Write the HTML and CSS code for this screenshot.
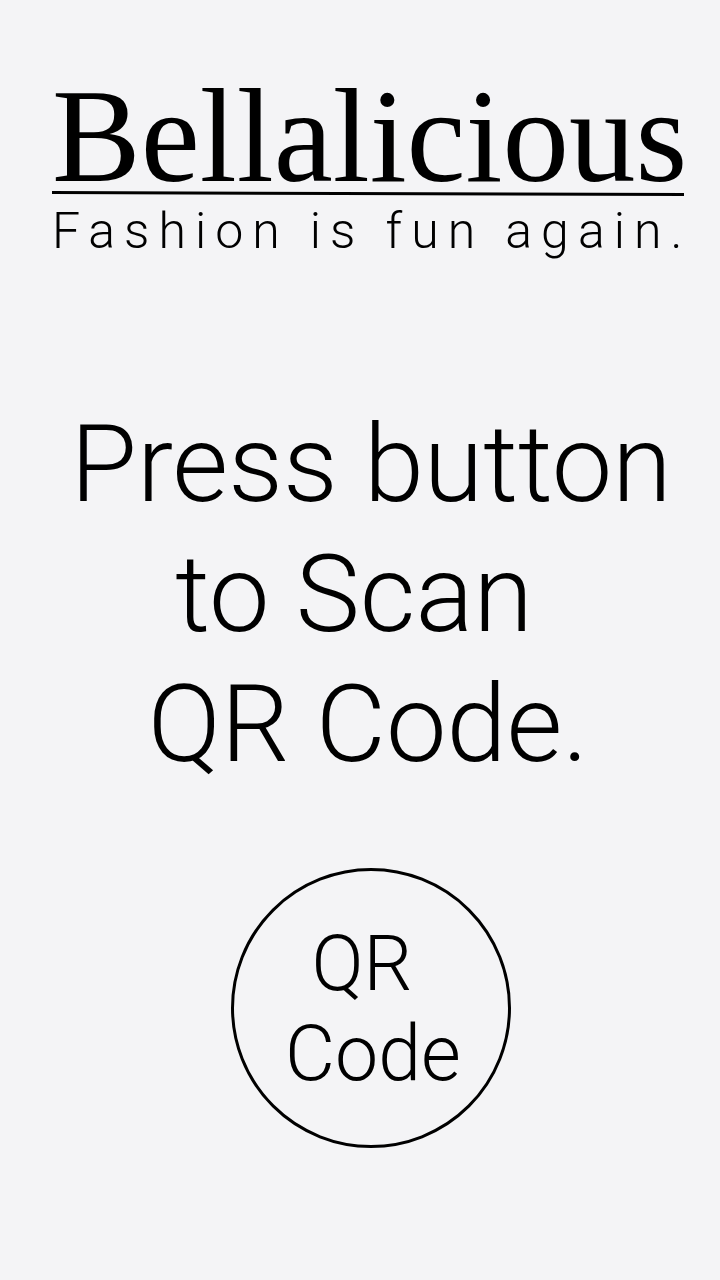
FILE: index.html
```html
<!DOCTYPE html>
<html lang="en">
<head>
<meta charset="utf-8">
<meta name="viewport" content="width=device-width, initial-scale=1">
<title>Bellalicious</title>
<link rel="stylesheet" href="styles.css">
</head>
<body>
<header class="brand">
<h1 class="brand-name">Bellalicious</h1>
<svg class="rule" viewBox="0 0 632 8" preserveAspectRatio="none" aria-hidden="true"><path d="M0 3L632 5V8L0 6Z"/></svg>
<p class="tagline">Fashion is fun again.</p>
</header>
<main class="scan">
<p class="prompt"><span class="line">Press button</span><span class="line line-middle">to Scan</span><span class="line line-last">QR Code.</span></p>
<button class="scan-button" type="button"><span class="label-top">QR</span><span class="label-bottom">Code</span></button>
</main>
</body>
</html>
```

FILE: styles.css
```css
* { box-sizing: border-box; }
body {
  margin: 0;
  min-height: 100vh;
  padding: 84px 30px 132px 52px;
  background: #f4f4f6;
  color: #000;
  font-family: Roboto, "Liberation Sans", sans-serif;
  font-weight: 300;
}
.brand { padding-right: 6px; }
.brand-name {
  margin: 0;
  font: 400 133px/104px "Liberation Serif", serif;
  white-space: nowrap;
}
.rule {
  display: block;
  width: 100%;
  height: 8px;
}
.tagline {
  margin: 0;
  font-size: 50px;
  line-height: 70px;
  letter-spacing: 9px;
  white-space: nowrap;
}
.scan {
  display: flex;
  flex-direction: column;
  align-items: center;
}
.prompt {
  margin: 133px 0 0;
  font-size: 108px;
  line-height: 130px;
  text-align: center;
  white-space: nowrap;
}
.line { display: block; }
.line-middle { padding-right: 34px; }
.line-last { padding-right: 6px; }
.scan-button {
  display: flex;
  flex-direction: column;
  justify-content: center;
  width: 280px;
  height: 280px;
  margin-top: 79px;
  padding: 2px 0 0 4px;
  border: 3px solid #000;
  border-radius: 50%;
  background: none;
  color: inherit;
  font: inherit;
  font-size: 77px;
  line-height: 90px;
  cursor: pointer;
}
.label-top, .label-bottom { align-self: center; }
.label-top { padding-right: 22px; }
```
